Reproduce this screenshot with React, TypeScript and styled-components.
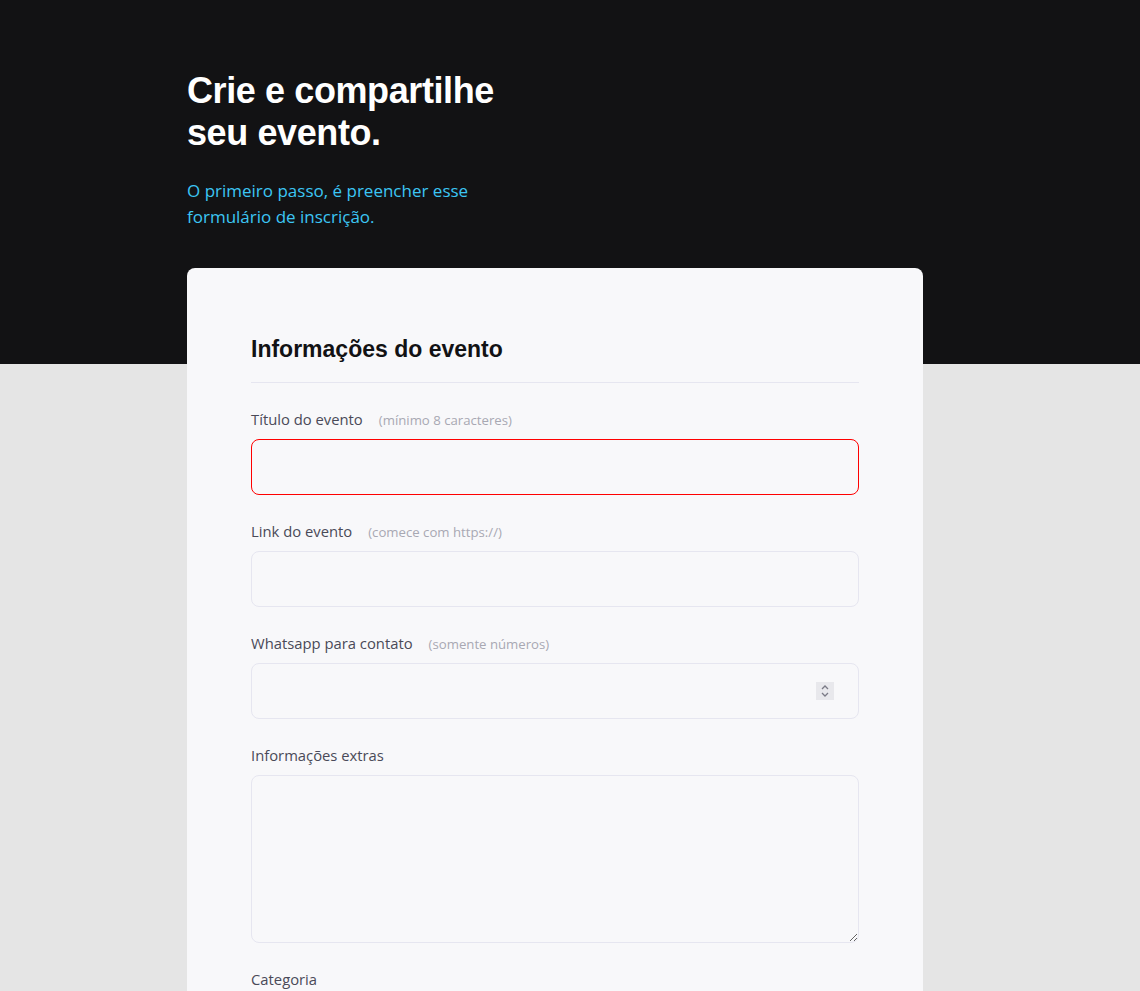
import React from "react";
import styled, { createGlobalStyle } from "styled-components";

const GlobalStyle = createGlobalStyle`
  * { box-sizing: border-box; }
  html, body { margin: 0; padding: 0; }
  body {
    background: #e5e5e5;
    font-family: "Open Sans", "Noto Sans", sans-serif;
    -webkit-font-smoothing: antialiased;
  }
`;

const Page = styled.div`
  min-height: 991px;
  background: #e5e5e5;
`;

const Hero = styled.header`
  background: #121214;
  padding: 70px 0 134px;
`;

const Container = styled.div`
  width: 736px;
  margin: 0 auto;
  position: relative;
  left: -15px;
`;

const Title = styled.h1`
  margin: 0;
  font-family: "Liberation Sans", Arial, sans-serif;
  font-weight: 700;
  font-size: 36px;
  line-height: 42px;
  color: #ffffff;
  letter-spacing: -0.4px;
`;

const Subtitle = styled.p`
  margin: 24px 0 0;
  font-size: 17px;
  line-height: 26px;
  color: #3cc6f4;
  width: 310px;
`;

const Card = styled.main`
  margin-top: -96px;
  background: #f8f8fa;
  border-radius: 8px 8px 0 0;
  padding: 65px 64px 0;
  min-height: 760px;
`;

const Section = styled.fieldset`
  border: 0;
  margin: 0;
  padding: 0;
`;

const Legend = styled.legend`
  width: 100%;
  padding: 0 0 17px;
  margin: 0 0 24px;
  border-bottom: 1px solid #e6e6f0;
  font-family: "Liberation Sans", Arial, sans-serif;
  font-weight: 700;
  font-size: 23px;
  line-height: 32px;
  color: #121214;
`;

const Field = styled.div`
  display: flex;
  flex-direction: column;
  gap: 8px;
  margin-bottom: 24px;
`;

const Label = styled.label`
  display: flex;
  align-items: baseline;
  height: 24px;
  font-size: 14.8px;
  line-height: 24px;
  color: #4a4a58;
`;

const Hint = styled.span`
  margin-left: 16px;
  font-size: 13.2px;
  color: #a8a8b3;
`;

const InputWrap = styled.div`
  position: relative;
  display: flex;
`;

const Input = styled.input<{ $error?: boolean }>`
  height: 56px;
  width: 100%;
  border: 1px solid ${(p) => (p.$error ? "#ff0000" : "#e6e6f0")};
  border-radius: 8px;
  background: #f8f8fa;
  padding: 0 24px;
  font-size: 16px;
  outline: none;
  -moz-appearance: textfield;

  &::-webkit-inner-spin-button,
  &::-webkit-outer-spin-button {
    -webkit-appearance: none;
    margin: 0;
  }
`;

const Spinner = styled.span`
  position: absolute;
  right: 25px;
  top: 50%;
  transform: translateY(-50%);
  width: 18px;
  height: 18px;
  background: #e8e8ec;
  display: flex;
  align-items: center;
  justify-content: center;
  pointer-events: none;
`;

const TextArea = styled.textarea`
  height: 168px;
  width: 100%;
  border: 1px solid #e6e6f0;
  border-radius: 8px;
  background: #f8f8fa;
  padding: 16px 24px;
  font-size: 16px;
  outline: none;
  resize: vertical;
`;

export default function App() {
  return (
    <Page>
      <GlobalStyle />
      <Hero>
        <Container>
          <Title>
            Crie e compartilhe
            <br />
            seu evento.
          </Title>
          <Subtitle>
            O primeiro passo, é preencher esse formulário de inscrição.
          </Subtitle>
        </Container>
      </Hero>
      <Container>
        <Card>
          <Section>
            <Legend>Informações do evento</Legend>
            <Field>
              <Label htmlFor="title">
                Título do evento<Hint>(mínimo 8 caracteres)</Hint>
              </Label>
              <Input id="title" $error />
            </Field>
            <Field>
              <Label htmlFor="link">
                Link do evento<Hint>(comece com https://)</Hint>
              </Label>
              <Input id="link" />
            </Field>
            <Field>
              <Label htmlFor="whatsapp">
                Whatsapp para contato<Hint>(somente números)</Hint>
              </Label>
              <InputWrap>
                <Input id="whatsapp" type="number" />
                <Spinner>
                  <svg width="10" height="14" viewBox="0 0 10 14" fill="none" stroke="#7a7a86" strokeWidth="1.3">
                    <path d="M2 5 L5 2 L8 5" />
                    <path d="M2 9 L5 12 L8 9" />
                  </svg>
                </Spinner>
              </InputWrap>
            </Field>
            <Field>
              <Label htmlFor="extras">Informações extras</Label>
              <TextArea id="extras" />
            </Field>
            <Field>
              <Label htmlFor="category">Categoria</Label>
            </Field>
          </Section>
        </Card>
      </Container>
    </Page>
  );
}
